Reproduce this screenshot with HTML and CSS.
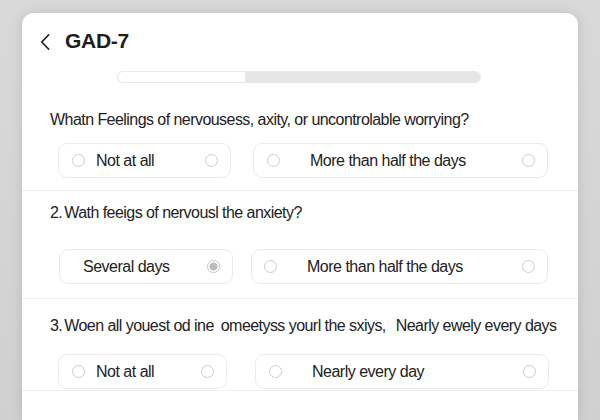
FILE: index.html
```html
<!DOCTYPE html>
<html lang="en">
<head>
<meta charset="utf-8">
<title>GAD-7</title>
<link rel="stylesheet" href="styles.css">
</head>
<body>
<div class="card">
  <header class="header">
    <svg class="back" width="10" height="16" viewBox="0 0 10 16"><path d="M8.5 1 L1.8 8 L8.5 15" fill="none" stroke="#222" stroke-width="1.8" stroke-linecap="round" stroke-linejoin="round"/></svg>
    <h1 class="title">GAD-7</h1>
  </header>
  <div class="progress"><div class="progress-fill" style="width:35.5%"></div></div>

  <section class="q q1">
    <p class="q-text">Whatn Feelings of nervousess, axity, or uncontrolable worrying?</p>
    <div class="opts opts1">
      <label class="opt opt-a"><span class="radio"></span><span class="opt-label">Not at all</span><span class="radio end"></span></label>
      <label class="opt opt-b"><span class="radio"></span><span class="opt-label wide">More than half the days</span><span class="radio end"></span></label>
    </div>
  </section>

  <section class="q q2">
    <p class="q-text">2.<span class="nsp"></span>Wath feeigs of nervousl the anxiety?</p>
    <div class="opts opts2">
      <label class="opt opt-a"><span class="opt-label plain">Several days</span><span class="radio end checked"></span></label>
      <label class="opt opt-b"><span class="radio"></span><span class="opt-label wide">More than half the days</span><span class="radio end"></span></label>
    </div>
  </section>

  <section class="q q3">
    <p class="q-text">3.<span class="nsp"></span>Woen all youest od ine<span class="sp2"></span>omeetyss yourl the sxiys,<span class="gap"></span>Nearly ewely every days</p>
    <div class="opts opts3">
      <label class="opt opt-a"><span class="radio"></span><span class="opt-label">Not at all</span><span class="radio end"></span></label>
      <label class="opt opt-b"><span class="radio"></span><span class="opt-label wide">Nearly every day</span><span class="radio end"></span></label>
    </div>
  </section>
</div>
</body>
</html>
```
FILE: styles.css
```css
* { box-sizing: border-box; }
html, body { margin: 0; padding: 0; }
body {
  width: 600px;
  height: 420px;
  overflow: hidden;
  background: linear-gradient(180deg, #d9d9d9 0%, #d0d0d0 100%);
  font-family: "Liberation Sans", Arial, sans-serif;
  color: #222;
}
.card {
  margin: 13px 0 0 22px;
  width: 556px;
  height: 407px;
  overflow: hidden;
  background: #fff;
  border-radius: 12px 12px 0 0;
  box-shadow: 0 0 12px rgba(0,0,0,0.12);
}
.header {
  display: flex;
  align-items: center;
  height: 56px;
  padding: 0 0 0 18px;
}
.back { display: block; margin-top: 2px; }
.title {
  margin: 0 0 0 15px;
  font-size: 21px;
  font-weight: 700;
  letter-spacing: -0.3px;
  color: #1d1d1d;
}
.progress {
  margin: 2px 0 0 95px;
  width: 364px;
  height: 12px;
  border-radius: 6px;
  background: #e6e6e6;
  overflow: hidden;
}
.progress-fill {
  height: 100%;
  background: #fff;
  border: 1px solid #e8e8e8;
  border-radius: 6px 0 0 6px;
}
.q { border-bottom: 1px solid #efefef; }
.q1 { padding: 27px 0 12px 28px; }
.q2 { padding: 12px 0 14px 28px; }
.q3 { padding: 17px 0 1px 28px; }
.q-text {
  margin: 0;
  font-size: 16px;
  line-height: 20px;
  letter-spacing: -0.55px;
  white-space: nowrap;
  color: #222;
}
.nsp { display: inline-block; width: 2px; }
.sp2 { display: inline-block; width: 7px; }
.gap { display: inline-block; width: 10px; }
.opts { display: flex; }
.opts1 { margin: 13px 0 0 8px; gap: 22px; }
.opts2 { margin: 26px 0 0 9px; gap: 18px; }
.opts3 { margin: 18px 0 0 8px; gap: 28px; }
.opt {
  display: flex;
  align-items: center;
  height: 35px;
  border: 1px solid #ebebeb;
  border-radius: 9px;
  background: #fff;
  padding: 0 12px 0 13px;
}
.opts1 .opt-a { width: 173px; }
.opts1 .opt-b { width: 295px; }
.opts2 .opt-a { width: 174px; }
.opts2 .opt-b { width: 297px; }
.opts3 .opt-a { width: 169px; }
.opts3 .opt-b { width: 294px; }
.opts2 .opt-b { padding-left: 12px; }
.radio {
  width: 13px;
  height: 13px;
  border: 1.5px solid #cdcdcd;
  border-radius: 50%;
  flex: none;
  background: #fff;
}
.radio.end { margin-left: auto; }
.radio.checked {
  border-color: #c4c4c4;
  background: radial-gradient(circle, #bcbcbc 0 3.6px, #fff 4.4px);
}
.opt-label {
  margin-left: 11px;
  font-size: 16px;
  letter-spacing: -0.5px;
  color: #222;
}
.opt-label.wide { margin-left: 30px; }
.opt-label.plain { margin-left: 10px; }
```
